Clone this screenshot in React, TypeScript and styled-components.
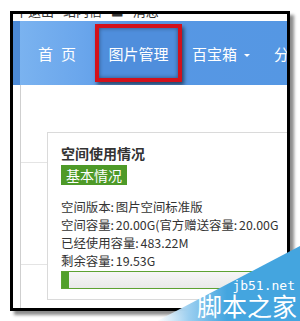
import React from 'react';
import styled, { createGlobalStyle } from 'styled-components';

const GlobalStyle = createGlobalStyle`
  html, body {
    margin: 0;
    padding: 0;
    background: #fff;
  }
  body {
    font-family: 'Noto Sans CJK SC', 'Noto Sans', sans-serif;
  }
`;

const CJK = `'Noto Sans CJK SC', 'Noto Sans', sans-serif`;

const Page = styled.div`
  position: relative;
  width: 300px;
  height: 321px;
  overflow: hidden;
  background: #fff;
  padding: 11px 0 0 10px;
  box-sizing: border-box;
`;

const Frame = styled.div`
  width: 280px;
  height: 300px;
  box-sizing: border-box;
  border: 3px solid #000;
  box-shadow: 4px 4px 3px rgba(0, 0, 0, 0.45);
  display: flex;
  flex-direction: column;
  overflow: hidden;
  background: #fff;
`;

const TopStrip = styled.div`
  height: 7px;
  overflow: hidden;
  flex-shrink: 0;
`;

const TopText = styled.div`
  margin-top: -10px;
  padding-left: 2px;
  font-family: ${CJK};
  font-size: 13px;
  line-height: 14px;
  color: #333;
  white-space: nowrap;
  word-spacing: 6px;
`;

const Nav = styled.div`
  height: 64px;
  flex-shrink: 0;
  display: flex;
  align-items: center;
  background: linear-gradient(90deg, #7cb4f0 0%, #6aa6ec 25%, #5797e4 45%, #5597e3 100%);
  overflow: hidden;
`;

const NavEdge = styled.div`
  width: 7px;
  flex-shrink: 0;
  align-self: stretch;
  background: #4c8ad6;
`;

const NavItem = styled.div<{ $gap: number; $spread?: boolean }>`
  margin-left: ${(p) => p.$gap}px;
  flex-shrink: 0;
  font-family: ${CJK};
  font-size: 15px;
  letter-spacing: ${(p) => (p.$spread ? '8px' : '0')};
  color: #fff;
  white-space: nowrap;
  display: flex;
  align-items: center;
`;

const ActiveItem = styled.div`
  margin-left: 11px;
  width: 87px;
  height: 58px;
  box-sizing: border-box;
  border: 4px solid #d2111b;
  background: #4f8edc;
  box-shadow: 2px 3px 4px rgba(0, 0, 0, 0.55), inset 0 0 4px rgba(0, 0, 0, 0.45);
  display: flex;
  align-items: center;
  justify-content: center;
  font-family: ${CJK};
  font-size: 15px;
  color: #fff;
  flex-shrink: 0;
`;

const Caret = styled.span`
  display: inline-block;
  margin-left: 7px;
  margin-top: 4px;
  border-left: 3px solid transparent;
  border-right: 3px solid transparent;
  border-top: 3px solid #fff;
`;

const Body = styled.div`
  flex: 1;
  display: flex;
  min-height: 0;
`;

const Gutter = styled.div`
  width: 7px;
  flex-shrink: 0;
  border-right: 1px solid #cfcfcf;
`;

const Main = styled.div`
  flex: 1;
  min-width: 0;
  padding: 47px 0 0 26px;
  display: flex;
  background:
    linear-gradient(#e4e4e4, #e4e4e4) 0 77px / 26px 1px no-repeat,
    linear-gradient(#e4e4e4, #e4e4e4) 0 179px / 26px 1px no-repeat;
`;

const Card = styled.div`
  flex: 1;
  min-width: 0;
  height: 168px;
  box-sizing: border-box;
  border: 1px solid #dadada;
  border-right: none;
  padding: 12px 0 0 13px;
  color: #333;
  font-family: ${CJK};
  overflow: hidden;
`;

const CardTitle = styled.div`
  font-size: 14px;
  font-weight: bold;
  line-height: 17px;
  color: #333;
`;

const Badge = styled.span`
  display: inline-block;
  height: 20px;
  line-height: 20px;
  padding: 0 5px;
  background: #4e9a28;
  color: #fff;
  font-size: 14px;
`;

const InfoList = styled.div`
  margin-top: 12px;
  font-size: 12.4px;
  line-height: 18px;
  white-space: nowrap;
  word-spacing: -1px;
`;

const ProgressTrack = styled.div`
  margin-top: 1px;
  width: 240px;
  height: 18px;
  box-sizing: border-box;
  border: 1px solid #5da232;
  background: linear-gradient(#f6f6f6, #e9e9e9);
`;

const ProgressFill = styled.div`
  height: 100%;
  background: #52a02b;
`;

const Watermark = styled.div`
  position: absolute;
  right: 0;
  bottom: 0;
  width: 143px;
  height: 75px;
  pointer-events: none;
`;

const WmSvg = styled.svg`
  position: absolute;
  inset: 0;
`;

const WmDomain = styled.div`
  position: absolute;
  right: 5px;
  top: 34px;
  font-family: 'DejaVu Sans Mono', monospace;
  font-size: 13px;
  line-height: 12px;
  color: #fff;
`;

const WmName = styled.div`
  position: absolute;
  right: 3px;
  top: 46px;
  font-family: ${CJK};
  font-size: 25px;
  line-height: 27px;
  color: #fff;
  white-space: nowrap;
`;

const info = [
  '空间版本: 图片空间标准版',
  '空间容量: 20.00G(官方赠送容量: 20.00G',
  '已经使用容量: 483.22M',
  '剩余容量: 19.53G',
];

export default function App() {
  const used = 483.22 / (20 * 1024);

  return (
    <>
      <GlobalStyle />
      <Page>
        <Frame>
          <TopStrip>
            <TopText>丨退出 站内信 ■ 消息</TopText>
          </TopStrip>
          <Nav>
            <NavEdge />
            <NavItem $gap={18} $spread>首页</NavItem>
            <ActiveItem>图片管理</ActiveItem>
            <NavItem $gap={10}>
              百宝箱
              <Caret />
            </NavItem>
            <NavItem $gap={24}>分类</NavItem>
          </Nav>
          <Body>
            <Gutter />
            <Main>
              <Card>
                <CardTitle>空间使用情况</CardTitle>
                <Badge>基本情况</Badge>
                <InfoList>
                  {info.map((line) => (
                    <div key={line}>{line}</div>
                  ))}
                </InfoList>
                <ProgressTrack>
                  <ProgressFill style={{ width: `${Math.max(used * 100, 3)}%` }} />
                </ProgressTrack>
              </Card>
            </Main>
          </Body>
        </Frame>
        <Watermark>
          <WmSvg width="143" height="75" viewBox="0 0 143 75">
            <defs>
              <linearGradient id="wmFade" gradientUnits="userSpaceOnUse" x1="0" y1="75" x2="70" y2="75">
                <stop offset="0" stopColor="#ffffff" stopOpacity="0.85" />
                <stop offset="0.45" stopColor="#9ccff0" />
                <stop offset="1" stopColor="#44a5df" />
              </linearGradient>
            </defs>
            <polygon points="0,75 143,0 143,75" fill="url(#wmFade)" />
          </WmSvg>
          <WmDomain>jb51.net</WmDomain>
          <WmName>脚本之家</WmName>
        </Watermark>
      </Page>
    </>
  );
}
